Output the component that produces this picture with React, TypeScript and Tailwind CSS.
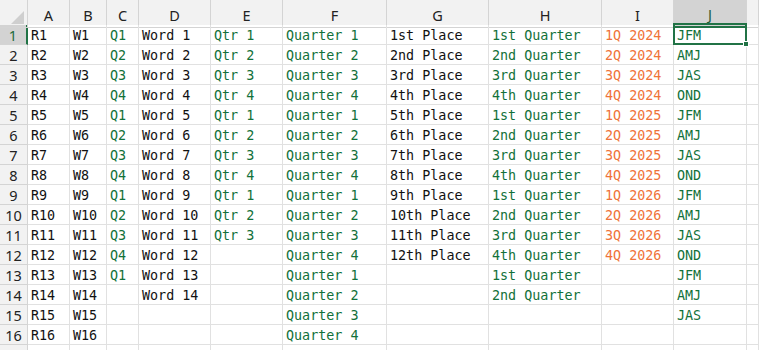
import type { ReactNode } from 'react'

const GREEN = 'text-[#12713a]'
const ORANGE = 'text-[#ef7339]'
const BLACK = 'text-[#111]'

const cols = ['A', 'B', 'C', 'D', 'E', 'F', 'G', 'H', 'I', 'J', '']

const quarters = ['Quarter 1', 'Quarter 2', 'Quarter 3', 'Quarter 4']
const ords = ['1st', '2nd', '3rd', '4th']
const months = ['JFM', 'AMJ', 'JAS', 'OND']

const rows = Array.from({ length: 16 }, (_, i) => {
  const n = i + 1
  const q = i % 4
  return [
    `R${n}`,
    `W${n}`,
    n <= 13 ? `Q${q + 1}` : '',
    n <= 14 ? `Word ${n}` : '',
    n <= 11 ? `Qtr ${q + 1}` : '',
    quarters[q],
    n <= 12 ? `${n}${n === 1 ? 'st' : n === 2 ? 'nd' : n === 3 ? 'rd' : 'th'} Place` : '',
    n <= 14 ? `${ords[q]} Quarter` : '',
    n <= 12 ? `${q + 1}Q ${2024 + Math.floor(i / 4)}` : '',
    n <= 15 ? months[q] : '',
    '',
  ]
})

const colColor = [BLACK, BLACK, GREEN, BLACK, GREEN, GREEN, BLACK, GREEN, ORANGE, GREEN, BLACK]

const gridCols =
  'grid grid-cols-[28px_42px_37px_32px_72px_72px_104px_102px_113px_72px_73px_1fr]'

const Cell = ({ children, className = '' }: { children?: ReactNode; className?: string }) => (
  <div
    className={`h-5 border-r border-b border-[#e1e1e1] pl-[3px] pt-[3px] flex items-center whitespace-nowrap overflow-visible ${className}`}
  >
    {children}
  </div>
)

export default function App() {
  return (
    <div className="w-[759px] h-[350px] overflow-hidden bg-white font-['DejaVu_Sans_Mono',monospace] text-[13.4px]">
      {/* column headers */}
      <div className={`${gridCols} h-[25px] bg-[#f2f2f2] font-['Noto_Sans',sans-serif] text-[14.5px] text-[#222]`}>
        <div className="relative border-r border-b border-[#d4d4d4]">
          <div className="absolute right-[3px] bottom-[3px] w-0 h-0 border-l-[13px] border-l-transparent border-b-[13px] border-b-[#cfcfcf]" />
        </div>
        {cols.map((c, i) => (
          <div
            key={i}
            className={`flex items-center justify-center pt-[4px] border-r border-[#d4d4d4] ${
              c === 'J' ? 'bg-[#d3d3d3] border-b-2 border-b-[#217346] text-[#1d5d38]' : 'border-b'
            }`}
          >
            {c}
          </div>
        ))}
      </div>

      {rows.map((r, ri) => (
        <div key={ri} className={gridCols}>
          <div
            className={`h-5 flex items-center justify-center pt-[2px] border-b border-[#d4d4d4] font-['Noto_Sans',sans-serif] text-[14.5px] ${
              ri === 0
                ? 'bg-[#d3d3d3] border-r-2 border-r-[#217346] text-[#1d6b3c]'
                : 'bg-[#f2f2f2] border-r text-[#222]'
            }`}
          >
            {ri + 1}
          </div>
          {r.map((v, ci) => (
            <Cell key={ci} className={`${colColor[ci]} ${ri === 0 && ci === 9 ? 'relative' : ''}`}>
              {v}
              {ri === 0 && ci === 9 && (
                <div className="absolute -left-px -top-[2px] w-[74px] h-[22px] border-2 border-[#217346]">
                  <div className="absolute -right-[4px] -bottom-[4px] w-[6px] h-[6px] bg-[#217346] border border-white" />
                </div>
              )}
            </Cell>
          ))}
        </div>
      ))}
      <div className={gridCols}>
        <div className="h-5 bg-[#f2f2f2] border-r border-[#d4d4d4]" />
        {cols.map((_, i) => (
          <Cell key={i} />
        ))}
      </div>
    </div>
  )
}
